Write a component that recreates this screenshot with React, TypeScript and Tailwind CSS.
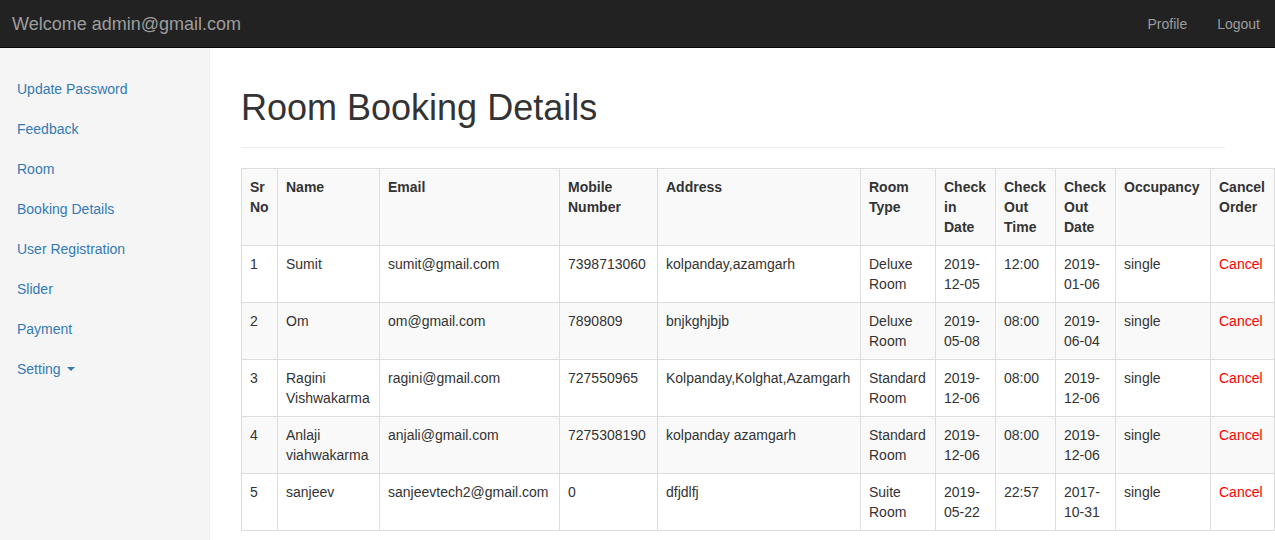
import React from "react";

const font = { fontFamily: '"Liberation Sans", Arial, Helvetica, sans-serif' };

const sideLinks = [
  "Update Password",
  "Feedback",
  "Room",
  "Booking Details",
  "User Registration",
  "Slider",
  "Payment",
];

type Row = {
  sr: string;
  name: string;
  email: string;
  mobile: string;
  address: string;
  room: string;
  checkIn: string;
  outTime: string;
  outDate: string;
  occ: string;
};

const rows: Row[] = [
  { sr: "1", name: "Sumit", email: "sumit@gmail.com", mobile: "7398713060", address: "kolpanday,azamgarh", room: "Deluxe Room", checkIn: "2019-12-05", outTime: "12:00", outDate: "2019-01-06", occ: "single" },
  { sr: "2", name: "Om", email: "om@gmail.com", mobile: "7890809", address: "bnjkghjbjb", room: "Deluxe Room", checkIn: "2019-05-08", outTime: "08:00", outDate: "2019-06-04", occ: "single" },
  { sr: "3", name: "Ragini Vishwakarma", email: "ragini@gmail.com", mobile: "727550965", address: "Kolpanday,Kolghat,Azamgarh", room: "Standard Room", checkIn: "2019-12-06", outTime: "08:00", outDate: "2019-12-06", occ: "single" },
  { sr: "4", name: "Anlaji viahwakarma", email: "anjali@gmail.com", mobile: "7275308190", address: "kolpanday azamgarh", room: "Standard Room", checkIn: "2019-12-06", outTime: "08:00", outDate: "2019-12-06", occ: "single" },
  { sr: "5", name: "sanjeev", email: "sanjeevtech2@gmail.com", mobile: "0", address: "dfjdlfj", room: "Suite Room", checkIn: "2019-05-22", outTime: "22:57", outDate: "2017-10-31", occ: "single" },
];

const widths = [36, 102, 180, 98, 203, 75, 60, 60, 60, 95, 64];

const cell = "border border-[#dddddd] p-2 align-top text-left break-words";

function Split({ text }: { text: string }) {
  // break dates after the hyphen like the reference
  const m = text.match(/^(\d{4}-)(.*)$/);
  if (m) {
    return (
      <>
        {m[1]}
        <br />
        {m[2]}
      </>
    );
  }
  return <>{text}</>;
}

export default function App() {
  return (
    <div className="min-h-screen bg-white text-[14px] leading-5 text-[#333333]" style={font}>
      <nav className="flex h-[48px] items-center justify-between border-b border-[#080808] bg-[#222222]">
        <span className="pl-[12px] text-[18px] leading-5 text-[#9d9d9d]">Welcome admin@gmail.com</span>
        <div className="flex">
          <a className="px-[15px] text-[#9d9d9d]">Profile</a>
          <a className="px-[15px] text-[#9d9d9d]">Logout</a>
        </div>
      </nav>
      <div className="flex min-h-[492px]">
        <aside className="w-[210px] shrink-0 border-r border-[#eeeeee] bg-[#f5f5f5] pt-[21px]">
          <ul>
            {sideLinks.map((l) => (
              <li key={l}>
                <a className="block py-[10px] pl-[17px] text-[#337ab7]">{l}</a>
              </li>
            ))}
            <li>
              <a className="flex items-center py-[10px] pl-[17px] text-[#337ab7]">
                Setting
                <span className="ml-[6px] inline-block h-0 w-0 border-x-[4px] border-t-[4px] border-x-transparent border-t-[#337ab7]" />
              </a>
            </li>
          </ul>
        </aside>
        <main className="min-w-0 flex-1 pl-[31px] pr-[50px]">
          <div className="mt-[40px] border-b border-[#eeeeee] pb-[19px]">
            <h1 className="text-[36px] font-normal leading-[40px] text-[#333333]">Room Booking Details</h1>
          </div>
          <table className="mt-[20px] w-[1034px] table-fixed border-collapse">
            <colgroup>
              {widths.map((w, i) => (
                <col key={i} style={{ width: w }} />
              ))}
            </colgroup>
            <tbody>
              <tr className="bg-[#f9f9f9] font-bold">
                <td className={cell}>Sr No</td>
                <td className={cell}>Name</td>
                <td className={cell}>Email</td>
                <td className={cell}>Mobile Number</td>
                <td className={cell}>Address</td>
                <td className={cell}>Room Type</td>
                <td className={cell}>Check in Date</td>
                <td className={cell}>Check Out Time</td>
                <td className={cell}>Check Out Date</td>
                <td className={cell}>Occupancy</td>
                <td className={cell}>Cancel Order</td>
              </tr>
              {rows.map((r, i) => (
                <tr key={r.sr} className={i % 2 === 1 ? "bg-[#f9f9f9]" : "bg-white"}>
                  <td className={cell}>{r.sr}</td>
                  <td className={cell}>{r.name}</td>
                  <td className={cell}>{r.email}</td>
                  <td className={cell}>{r.mobile}</td>
                  <td className={cell}>{r.address}</td>
                  <td className={cell}>{r.room}</td>
                  <td className={cell}>
                    <Split text={r.checkIn} />
                  </td>
                  <td className={cell}>{r.outTime}</td>
                  <td className={cell}>
                    <Split text={r.outDate} />
                  </td>
                  <td className={cell}>{r.occ}</td>
                  <td className={cell}>
                    <a className="text-[#ff0000]">Cancel</a>
                  </td>
                </tr>
              ))}
            </tbody>
          </table>
        </main>
      </div>
    </div>
  );
}
